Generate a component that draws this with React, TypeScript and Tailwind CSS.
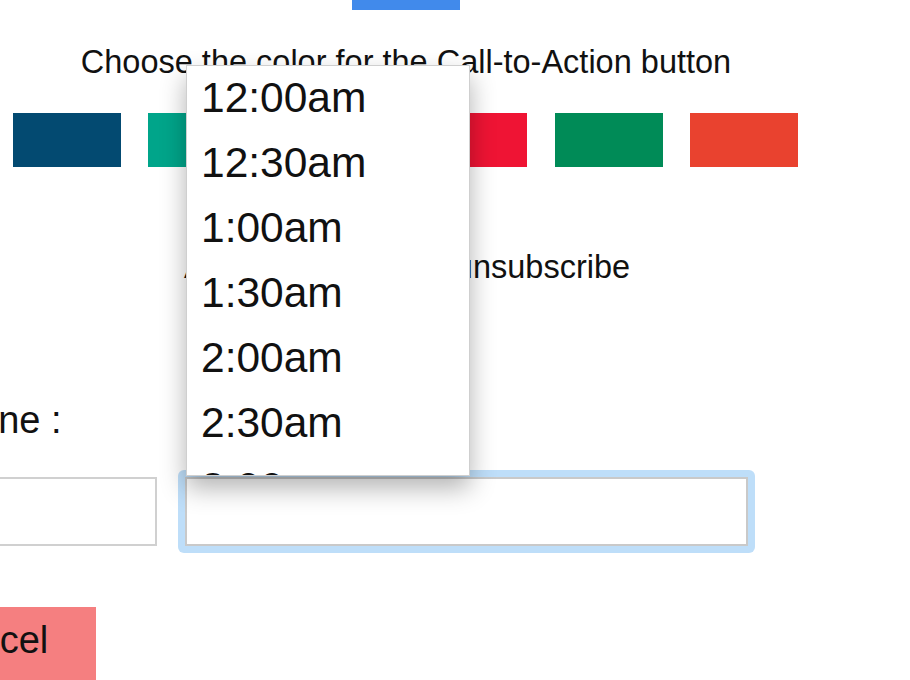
import React from "react";

const swatches = ["#034a71", "#00a58a", "#f5b800", "#ef1434", "#008b57", "#e9422f"];

const times = ["12:00am", "12:30am", "1:00am", "1:30am", "2:00am", "2:30am", "3:00am", "3:30am"];

const App: React.FC = () => {
  return (
    <div className="relative h-[680px] w-[910px] overflow-hidden bg-white font-['Liberation_Sans',Arial,sans-serif] text-[#111]">
      <div className="w-[812px]">
        <div className="mx-auto h-[10px] w-[108px] bg-[#418aeb]" />
        <p className="mt-[33px] text-center text-[32.5px] leading-[38px]">
          Choose the color for the Call-to-Action button
        </p>
        <div className="mt-[32px] flex gap-[27.4px] pl-[13px]">
          {swatches.map((c) => (
            <div key={c} className="h-[54px] w-[108px]" style={{ backgroundColor: c }} />
          ))}
        </div>
        <p className="mt-[81px] pl-[2px] text-center text-[32.5px] leading-[38px]">
          Allow recipients to unsubscribe
        </p>

        <p className="-ml-[125px] mt-[112px] whitespace-nowrap text-[38px] leading-[44px]">Timezone :</p>

        <div className="mt-[28px] flex items-center">
          <div className="-ml-[60px] h-[69px] w-[217px] border-2 border-[#d0d0d0] bg-white" />
          <div className="ml-[21px] rounded-[6px] bg-[#bedef9] p-[7px]">
            <div className="h-[69px] w-[563px] border-2 border-[#c9c9c9] bg-white" />
          </div>
        </div>

        <div className="mt-[54px] flex">
          <button className="-ml-[115px] flex h-[90px] items-start whitespace-nowrap bg-[#f57f80] pl-[45px] pr-[48px] pt-[14px] text-[38px] leading-[38px] text-[#111]">
            Cancel
          </button>
        </div>
      </div>

      <ul className="absolute left-[186px] top-[65px] h-[411px] w-[284px] overflow-hidden border border-[#cfcfcf] bg-white shadow-[0_12px_24px_rgba(0,0,0,0.3)]">
        {times.map((t) => (
          <li key={t} className="flex h-[65px] items-center pl-[14px] text-[42.5px] leading-none">
            {t}
          </li>
        ))}
      </ul>
    </div>
  );
};

export default App;
